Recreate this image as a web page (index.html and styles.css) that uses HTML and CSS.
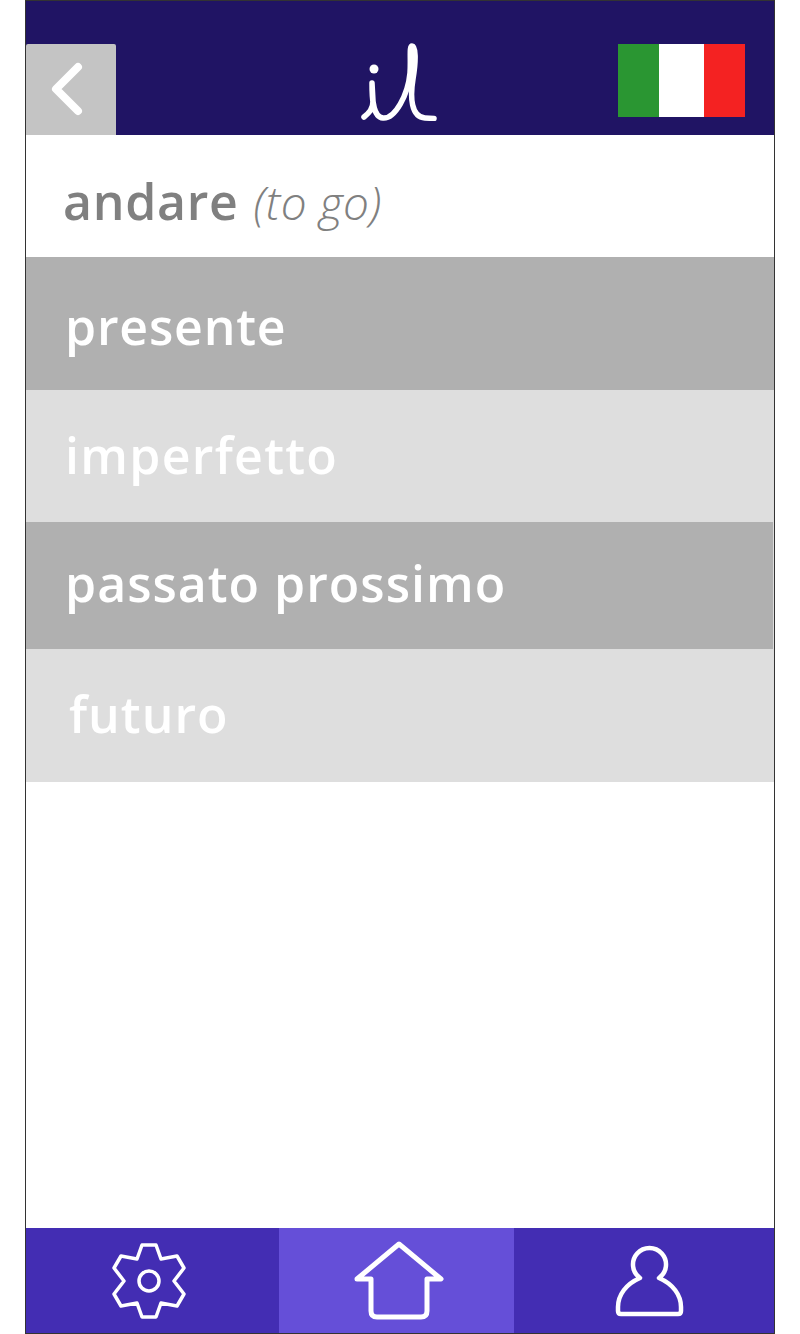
FILE: index.html

```html
<!DOCTYPE html>
<html lang="en">
<head>
  <meta charset="UTF-8">
  <meta name="viewport" content="width=device-width, initial-scale=1.0">
  <title>il | andare</title>
  <link rel="stylesheet" href="styles.css">
</head>
<body>
  <div class="phone">
    <header class="topbar">
      <a class="back" href="#">
        <svg width="90" height="91" viewBox="0 0 90 91"><path class="line" stroke-width="8" d="M52 23 30 45 52 67"/></svg>
      </a>
      <svg class="logo" width="80" height="80" viewBox="0 0 80 80">
        <circle cx="15" cy="28" r="4.500" fill="#fff"/>
        <path class="line" stroke-width="5.500" d="M5 76C10 72 14 68 14 60L13 42C13 54 13 76 24 77C36 78 49 54 51 32C52 18 50 5 53 5C57 5 57 20 54 38C51 56 52 76 66 77L75 77.500"/>
      </svg>
      <div class="flag">
        <span class="green"></span>
        <span class="white"></span>
        <span class="red"></span>
      </div>
    </header>

    <h1 class="verb"><b>andare</b> <i>(to go)</i></h1>

    <div class="tenses">
      <a class="tense dark first" href="#">presente</a>
      <a class="tense light" href="#">imperfetto</a>
      <a class="tense dark short" href="#">passato prossimo</a>
      <a class="tense light last" href="#">futuro</a>
    </div>

    <div class="spacer"></div>

    <nav class="tabs">
      <a class="tab settings" href="#">
        <svg width="80" height="80" viewBox="0 0 80 80">
          <path class="line" stroke-width="3.500" d="M33 4H47L52 18 68 15 75 27 65 40 75 53 68 65 52 62 47 76H33L28 62 12 65 5 53 15 40 5 27 12 15 28 18Z"/>
          <circle class="line" stroke-width="3.500" cx="40" cy="40" r="10"/>
        </svg>
      </a>
      <a class="tab home" href="#">
        <svg width="100" height="90" viewBox="0 0 100 90">
          <path class="line" stroke-width="5" d="M50 8 92 43H78V75Q78 81 72 81H28Q22 81 22 75V43H8Z"/>
        </svg>
      </a>
      <a class="tab profile" href="#">
        <svg width="80" height="80" viewBox="0 0 80 80">
          <path class="line" stroke-width="4.500" d="M30 37C16 43 8 54 8 66V70Q8 73 11 73H68Q71 73 71 70V66C71 54 63 43 49 37A16.500 16.500 0 1 0 30 37Z"/>
        </svg>
      </a>
    </nav>
  </div>
</body>
</html>
```

FILE: styles.css

```css
body {
  margin: 0;
  background-color: #fff;
  font-family: "Open Sans", sans-serif;
}
svg {
  display: block;
}
a {
  color: inherit;
  text-decoration: none;
}
.line {
  fill: none;
  stroke: #fff;
  stroke-linecap: round;
  stroke-linejoin: round;
}
.phone {
  box-sizing: border-box;
  width: 750px;
  height: 1334px;
  margin-left: 25px;
  border: 1px solid #333;
  display: flex;
  flex-direction: column;
}
.topbar {
  height: 134px;
  background-color: #201464;
  display: grid;
  grid-template-columns: 1fr auto 1fr;
  align-items: start;
}
.back {
  width: 90px;
  height: 91px;
  margin-top: 43px;
  background-color: #c4c4c4;
  border-radius: 2px 2px 0 0;
}
.logo {
  margin-top: 40px;
  margin-left: -2px;
}
.flag {
  justify-self: end;
  width: 127px;
  height: 73px;
  margin-top: 43px;
  margin-right: 29px;
  display: flex;
}
.flag span {
  display: block;
}
.green {
  width: 41px;
  background-color: #2a9632;
}
.white {
  width: 45px;
  background-color: #fff;
}
.red {
  width: 41px;
  background-color: #f42222;
}
.verb {
  height: 122px;
  margin: 0;
  padding-left: 37px;
  box-sizing: border-box;
  font-size: 50px;
  font-weight: 400;
  line-height: 132px;
  color: #808080;
  white-space: nowrap;
}
.verb b {
  font-weight: 600;
  letter-spacing: 0.7px;
}
.verb i {
  font-size: 46px;
  font-weight: 300;
  letter-spacing: 0.3px;
  margin-left: 2px;
}
.tenses {
  background-color: #dedede;
}
.tense {
  display: block;
  padding-left: 39px;
  font-size: 50px;
  font-weight: 600;
  letter-spacing: 1px;
  color: #fff;
  white-space: nowrap;
}
.dark {
  background-color: #b0b0b0;
}
.light {
  background-color: #dedede;
}
.first {
  height: 133px;
  line-height: 138px;
  letter-spacing: 0.8px;
}
.tense.light {
  height: 132px;
  line-height: 130px;
  letter-spacing: 1.3px;
}
.short {
  height: 127px;
  line-height: 122px;
  margin-right: 1px;
}
.tense.last {
  height: 133px;
  padding-left: 43px;
  letter-spacing: 1px;
}
.spacer {
  flex: 1;
}
.tabs {
  height: 105px;
  display: flex;
  background-color: #432db3;
}
.tab {
  padding-top: 13px;
  box-sizing: border-box;
}
.settings {
  width: 253px;
  padding-left: 83px;
}
.home {
  width: 235px;
  padding-top: 8px;
  padding-left: 70px;
  background-color: #654fd8;
}
.profile {
  flex: 1;
  padding-left: 96px;
}
```
